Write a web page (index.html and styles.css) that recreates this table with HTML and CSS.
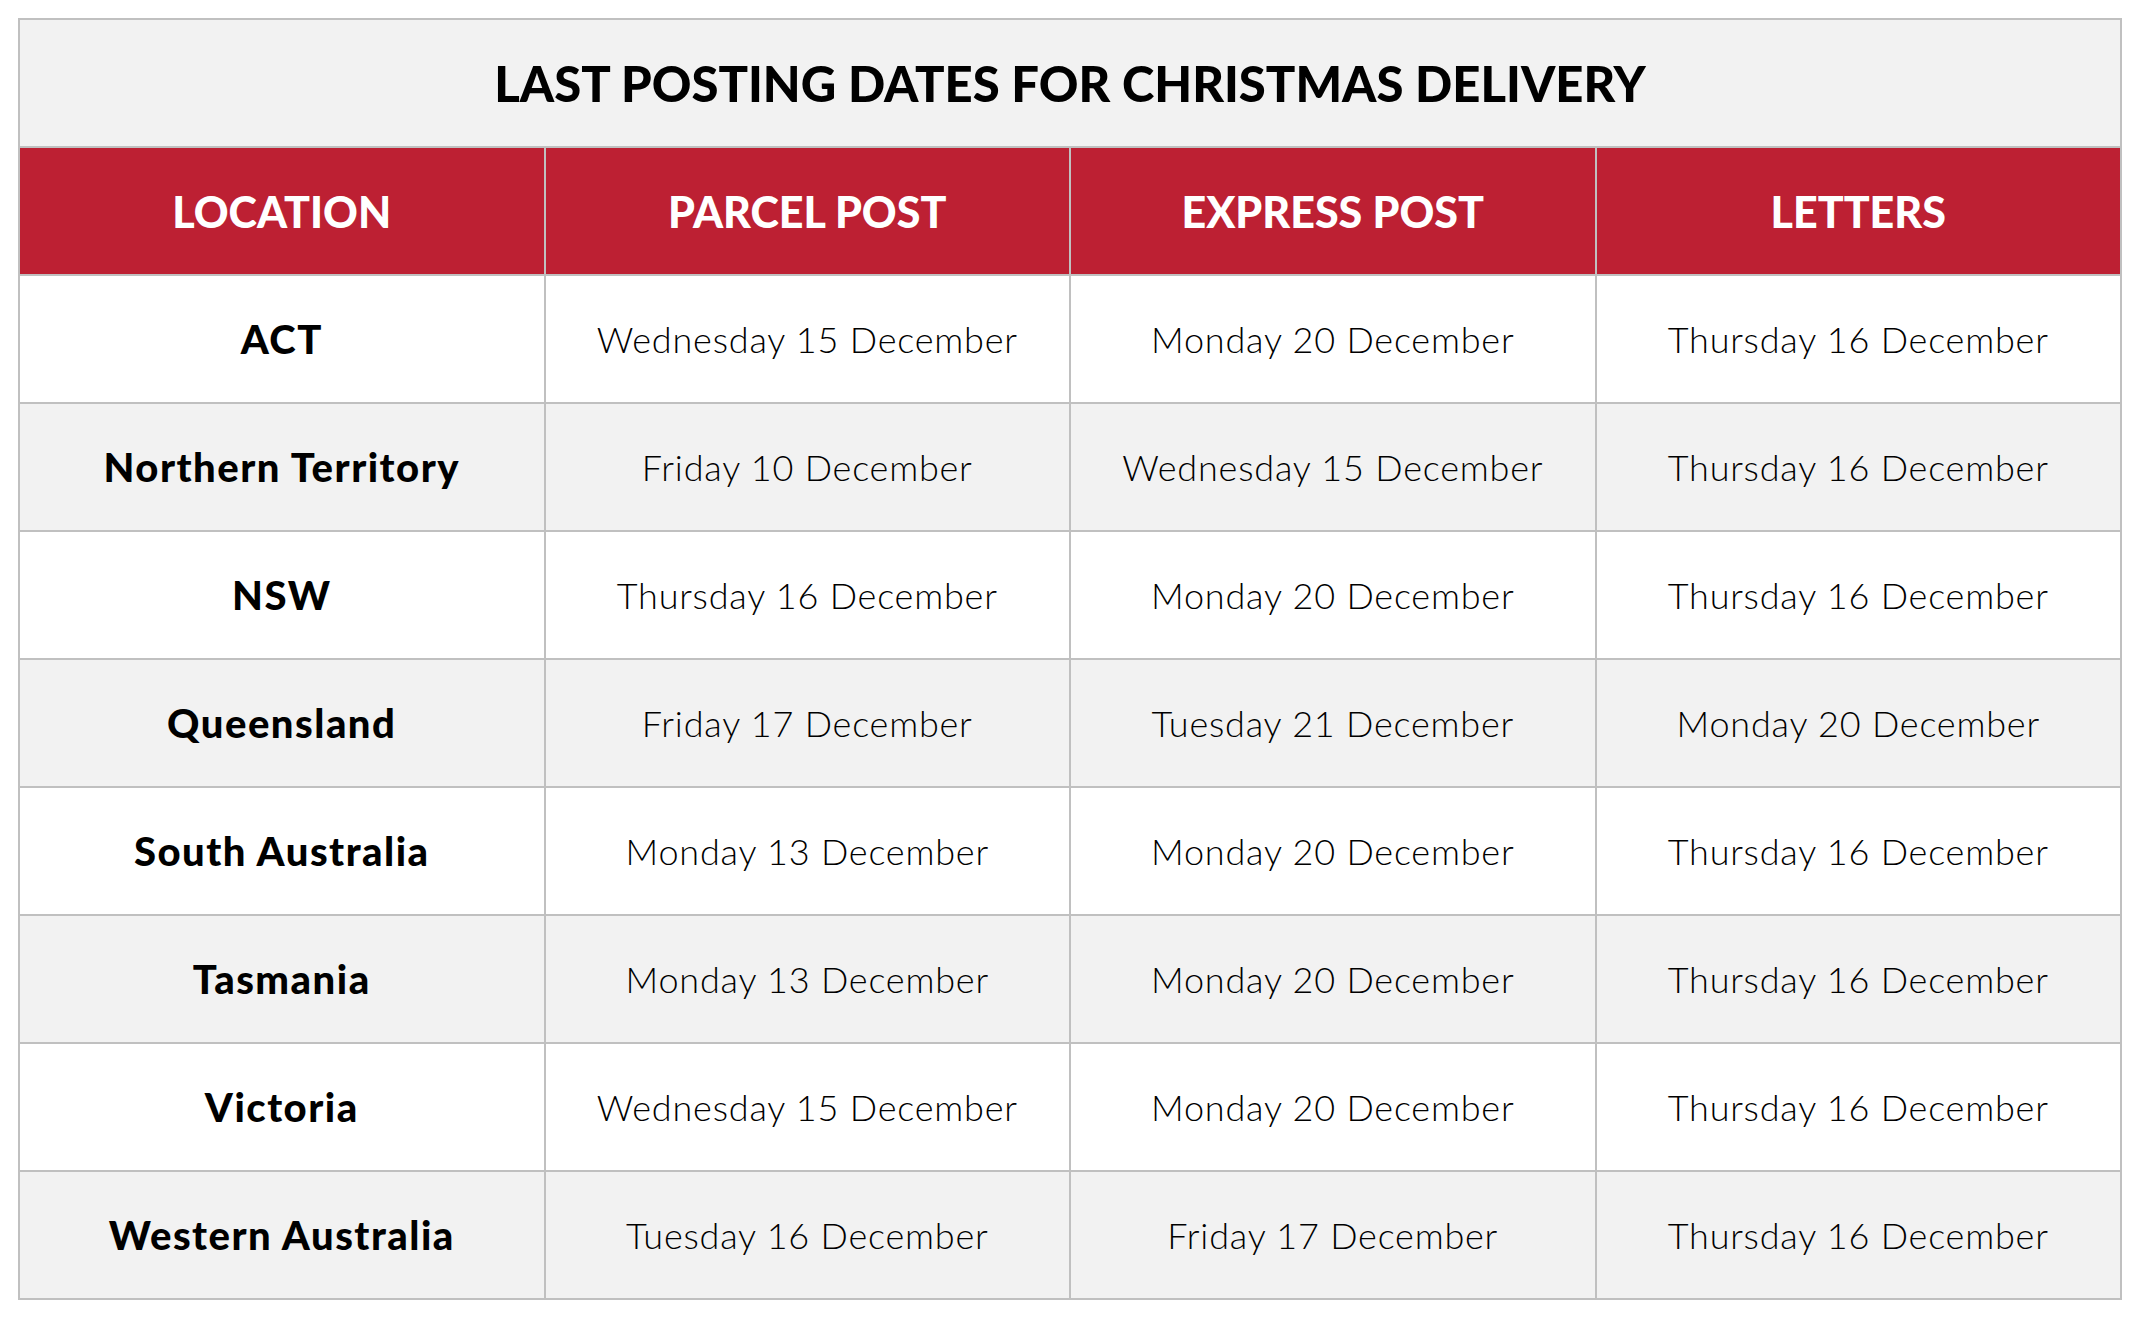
FILE: index.html
```html
<!DOCTYPE html>
<html lang="en">
<head>
<meta charset="utf-8">
<title>Last Posting Dates for Christmas Delivery</title>
<link rel="stylesheet" href="styles.css">
</head>
<body>
<table class="dates">
  <thead>
    <tr class="title-row"><th colspan="4" class="title">LAST POSTING DATES FOR CHRISTMAS DELIVERY</th></tr>
    <tr class="head-row">
      <th>LOCATION</th><th>PARCEL POST</th><th>EXPRESS POST</th><th>LETTERS</th>
    </tr>
  </thead>
  <tbody>
    <tr><th class="loc">ACT</th><td>Wednesday 15 December</td><td>Monday 20 December</td><td>Thursday 16 December</td></tr>
    <tr><th class="loc">Northern Territory</th><td>Friday 10 December</td><td>Wednesday 15 December</td><td>Thursday 16 December</td></tr>
    <tr><th class="loc">NSW</th><td>Thursday 16 December</td><td>Monday 20 December</td><td>Thursday 16 December</td></tr>
    <tr><th class="loc">Queensland</th><td>Friday 17 December</td><td>Tuesday 21 December</td><td>Monday 20 December</td></tr>
    <tr><th class="loc">South Australia</th><td>Monday 13 December</td><td>Monday 20 December</td><td>Thursday 16 December</td></tr>
    <tr><th class="loc">Tasmania</th><td>Monday 13 December</td><td>Monday 20 December</td><td>Thursday 16 December</td></tr>
    <tr><th class="loc">Victoria</th><td>Wednesday 15 December</td><td>Monday 20 December</td><td>Thursday 16 December</td></tr>
    <tr><th class="loc">Western Australia</th><td>Tuesday 16 December</td><td>Friday 17 December</td><td>Thursday 16 December</td></tr>
  </tbody>
</table>
</body>
</html>
```
FILE: styles.css
```css
html, body {
  margin: 0;
  padding: 0;
  background: #ffffff;
}
body {
  padding: 18px 0 0 18px;
  font-family: Lato, "Liberation Sans", sans-serif;
  color: #000;
}
.dates {
  border-collapse: collapse;
  width: 2104px;
  table-layout: fixed;
}
.dates th, .dates td {
  border: 2px solid #c0c0c0;
  text-align: center;
  vertical-align: middle;
  padding: 0;
  height: 126px;
}
.title {
  background: #f2f2f2;
  font-size: 49px;
  font-weight: 900;
}
.head-row th {
  background: #bd2033;
  color: #fff;
  font-size: 43px;
  font-weight: 900;
}
.loc {
  font-size: 40px;
  font-weight: 900;
  letter-spacing: 1.5px;
}
.dates td {
  font-size: 36px;
  font-weight: 300;
  letter-spacing: 0.8px;
}
.dates tbody tr:nth-child(even) {
  background: #f2f2f2;
}
.dates tbody tr:nth-child(odd) {
  background: #ffffff;
}
```
